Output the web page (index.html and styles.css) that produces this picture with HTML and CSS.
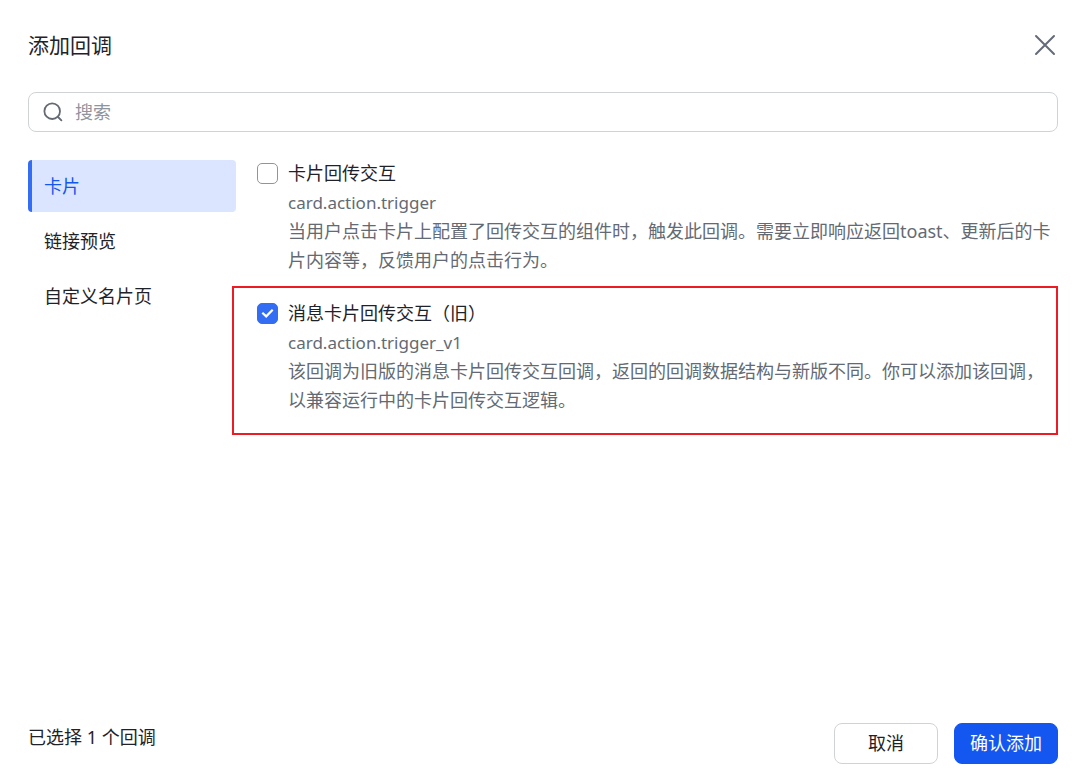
FILE: index.html
```html
<!DOCTYPE html>
<html lang="zh-CN">
<head>
<meta charset="utf-8">
<meta name="viewport" content="width=device-width, initial-scale=1">
<title>添加回调</title>
<link rel="stylesheet" href="styles.css">
</head>
<body>
<main class="dialog">
  <header class="dialog-header">
    <h1 class="dialog-title">添加回调</h1>
    <button class="close" type="button" aria-label="关闭">
      <svg width="26" height="26" viewBox="0 0 26 26" fill="none" stroke="#646a78" stroke-width="2" stroke-linecap="round"><path d="M4 4l18 18M22 4L4 22"/></svg>
    </button>
  </header>

  <label class="search">
    <svg width="20" height="20" viewBox="0 0 20 20" fill="none" stroke="#646a73" stroke-width="1.8" stroke-linecap="round"><circle cx="9.2" cy="9.2" r="7.8"/><path d="M15 15l3.4 3.4"/></svg>
    <input class="search-input" type="text" placeholder="搜索" aria-label="搜索">
  </label>

  <div class="content">
    <nav class="tabs">
      <button class="tab tab-active" type="button">卡片</button>
      <button class="tab" type="button">链接预览</button>
      <button class="tab" type="button">自定义名片页</button>
    </nav>
    <div class="options">
      <div class="option">
        <input class="check" type="checkbox" id="trigger">
        <div class="option-text">
          <label class="option-name" for="trigger">卡片回传交互</label>
          <p class="option-detail option-key">card.action.trigger</p>
          <p class="option-detail">当用户点击卡片上配置了回传交互的组件时，触发此回调。需要立即响应返回toast、更新后的卡片内容等，反馈用户的点击行为。</p>
        </div>
      </div>
      <div class="option option-marked">
        <input class="check" type="checkbox" id="trigger-v1" checked>
        <div class="option-text">
          <label class="option-name" for="trigger-v1">消息卡片回传交互（旧）</label>
          <p class="option-detail option-key">card.action.trigger_v1</p>
          <p class="option-detail">该回调为旧版的消息卡片回传交互回调，返回的回调数据结构与新版不同。你可以添加该回调，以兼容运行中的卡片回传交互逻辑。</p>
        </div>
      </div>
    </div>
  </div>

  <footer class="dialog-footer">
    <p class="summary">已选择 1 个回调</p>
    <button class="button" type="button">取消</button>
    <button class="button button-primary" type="button">确认添加</button>
  </footer>
</main>
</body>
</html>
```

FILE: styles.css
```css
* {
  box-sizing: border-box;
}

body {
  margin: 0;
  background: #fff;
  color: #1f2329;
  font: 18px/29px "Noto Sans", "Noto Sans CJK SC", sans-serif;
}

button,
input {
  font: inherit;
  color: inherit;
}

button {
  cursor: pointer;
}

h1,
p {
  margin: 0;
}

.dialog {
  display: flex;
  flex-direction: column;
  min-height: 100vh;
  padding: 28px 22px 18px 28px;
}

.dialog-header {
  display: flex;
  align-items: center;
  justify-content: space-between;
  height: 34px;
}

.dialog-title {
  font-size: 21px;
  font-weight: 400;
}

.close {
  display: flex;
  padding: 0;
  border: 0;
  background: none;
}

.search {
  display: flex;
  align-items: center;
  gap: 12px;
  height: 40px;
  margin-top: 30px;
  padding: 0 14px;
  border: 1px solid #d0d3d6;
  border-radius: 8px;
}

.search-input {
  flex: 1;
  min-width: 0;
  padding: 0;
  border: 0;
  outline: 0;
  background: none;
}

.search-input::placeholder {
  color: #8f959e;
  opacity: 1;
}

.content {
  display: flex;
  flex: 1;
  gap: 21px;
  margin-top: 28px;
}

.tabs {
  display: flex;
  flex: 0 0 208px;
  flex-direction: column;
  gap: 3px;
}

.tab {
  height: 52px;
  padding: 0 12px;
  border: 0;
  border-left: 4px solid transparent;
  border-radius: 4px;
  background: none;
  text-align: left;
}

.tab-active {
  border-left-color: #336df4;
  background: linear-gradient(#dbe5ff, #dbe5ff) padding-box;
  color: #1456f0;
}

.options {
  flex: 1;
  min-width: 0;
  margin-top: -1px;
}

.option {
  display: flex;
  gap: 10px;
}

.option-marked {
  margin: 11px 0 0 -25px;
  padding: 11px 0 18px 23px;
  border: 2px solid #ed1c24;
}

.check {
  display: grid;
  flex: none;
  place-content: center;
  width: 21px;
  height: 21px;
  margin: 4px 0 0;
  appearance: none;
  border: 1px solid #8f959e;
  border-radius: 5px;
  background: #fff;
}

.check:checked {
  border-color: #336df4;
  background: #336df4;
}

.check:checked::before {
  content: "";
  width: 13px;
  height: 9px;
  background: #fff;
  clip-path: polygon(4% 50%, 16% 32%, 40% 64%, 84% 0%, 96% 18%, 40% 100%);
}

.option-text {
  flex: 1;
  min-width: 0;
}

.option-name {
  display: block;
}

.option-detail {
  color: #646a73;
}

.option-key {
  font-size: 17px;
}

.dialog-footer {
  display: flex;
  align-items: center;
  gap: 16px;
}

.summary {
  flex: 1;
  padding-bottom: 12px;
}

.button {
  width: 104px;
  height: 41px;
  padding: 0;
  border: 1px solid #d0d3d6;
  border-radius: 8px;
  background: #fff;
}

.button-primary {
  border-color: #1456f0;
  background: #1456f0;
  color: #fff;
}
```
